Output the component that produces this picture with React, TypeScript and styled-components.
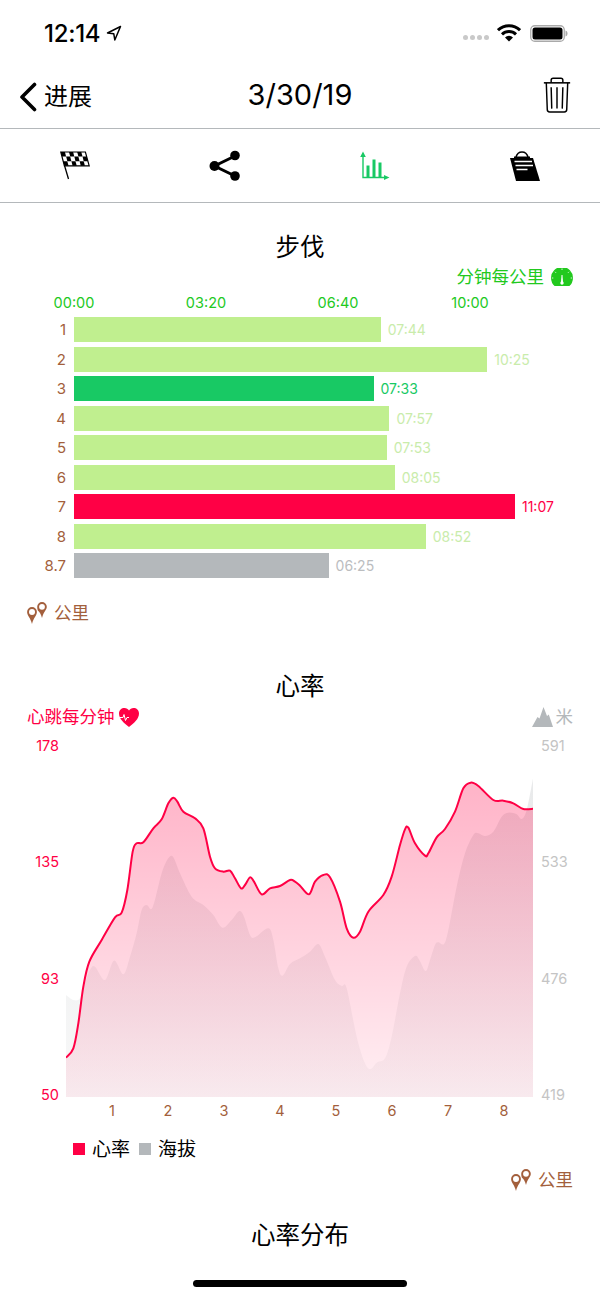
import React from "react";
import styled, { createGlobalStyle } from "styled-components";

const RED = "#ff0045";
const GREEN = "#22c91e";
const MINT = "#18c964";
const LIME = "#c0ef8f";
const LIME_TEXT = "#c9ecab";
const SLATE = "#b4b8bb";
const BROWN = "#a35f3c";

const GlobalStyle = createGlobalStyle`
  html, body {
    margin: 0;
    padding: 0;
    background: #fff;
  }
  body {
    font-family: Inter, "Noto Sans CJK SC", sans-serif;
    color: #000;
  }
`;

const Page = styled.div`
  position: relative;
  width: 600px;
  height: 1299px;
  overflow: hidden;
  background: #fff;
`;

const StatusBar = styled.div`
  height: 66px;
  padding: 0 32px 0 44px;
  box-sizing: border-box;
  display: flex;
  align-items: center;
  justify-content: space-between;
`;

const StatusLeft = styled.div`
  display: flex;
  align-items: center;
  gap: 6px;
  font-size: 24px;
  font-weight: 500;
  letter-spacing: -0.3px;
`;

const StatusRight = styled.div`
  display: flex;
  align-items: center;
  gap: 9px;
`;

const SignalDots = styled.div`
  display: flex;
  gap: 1.5px;
  margin-top: 9px;
  margin-right: -1px;
`;

const SignalDot = styled.span`
  width: 5.5px;
  height: 5.5px;
  border-radius: 50%;
  background: #c9c9c9;
`;

const NavBar = styled.div`
  height: 62px;
  padding: 0 29px 0 19px;
  display: flex;
  align-items: center;
  justify-content: space-between;
  border-bottom: 1.5px solid ${SLATE};
`;

const BackLink = styled.div`
  width: 130px;
  display: flex;
  align-items: center;
  gap: 7px;
  font-size: 24px;
`;

const BackText = styled.span`
  padding-bottom: 5px;
`;

const NavDate = styled.div`
  font-size: 29px;
  padding-bottom: 6px;
`;

const NavAction = styled.div`
  width: 120px;
  display: flex;
  justify-content: flex-end;
  padding-bottom: 4px;
`;

const TabBar = styled.div`
  height: 73px;
  display: grid;
  grid-template-columns: repeat(4, 1fr);
  border-bottom: 1.5px solid ${SLATE};
`;

const Tab = styled.div`
  display: flex;
  align-items: center;
  justify-content: center;
`;

const SectionTitle = styled.h2<{ $top: number }>`
  margin: ${(p) => p.$top}px 0 0;
  height: 34px;
  line-height: 34px;
  font-size: 24.5px;
  font-weight: 400;
  text-align: center;
`;

const UnitRow = styled.div<{ $top: number; $justify: string }>`
  margin-top: ${(p) => p.$top}px;
  height: 22px;
  padding: 0 27px;
  display: flex;
  align-items: center;
  justify-content: ${(p) => p.$justify};
`;

const UnitLabel = styled.div<{ $color: string; $gap: number }>`
  display: flex;
  align-items: center;
  gap: ${(p) => p.$gap}px;
  font-size: 17.5px;
  color: ${(p) => p.$color};
`;

const UnitText = styled.span`
  padding-bottom: 3px;
`;

const PaceAxis = styled.div`
  margin: 6px 0 0 8px;
  height: 18px;
  display: grid;
  grid-template-columns: repeat(4, 132px);
`;

const PaceTick = styled.span`
  font-size: 14.5px;
  line-height: 18px;
  text-align: center;
  color: ${GREEN};
`;

const PaceList = styled.div`
  margin-top: 5px;
  display: flex;
  flex-direction: column;
  gap: 4.5px;
`;

const PaceRow = styled.div`
  height: 25px;
  display: flex;
  align-items: center;
`;

const PaceIndex = styled.span`
  width: 74px;
  padding-right: 8px;
  box-sizing: border-box;
  text-align: right;
  font-size: 15px;
  color: ${BROWN};
`;

const PaceBar = styled.div<{ $color: string }>`
  height: 25px;
  background: ${(p) => p.$color};
`;

const PaceValue = styled.span<{ $color: string }>`
  margin-left: 7px;
  font-size: 14px;
  color: ${(p) => p.$color};
`;

const ChartRow = styled.div`
  margin-top: 9px;
  height: 365px;
  display: flex;
`;

const ValueAxis = styled.div<{ $color: string; $align: string; $width: number }>`
  width: ${(p) => p.$width}px;
  height: 365px;
  margin-top: 1px;
  display: flex;
  flex-direction: column;
  justify-content: space-between;
  text-align: ${(p) => p.$align};
  font-size: 14.5px;
  line-height: 16px;
  color: ${(p) => p.$color};
`;

const Plot = styled.svg`
  display: block;
  width: 467px;
  height: 360px;
  margin-left: 7px;
  margin-right: 8px;
  flex: none;
`;

const DistanceAxis = styled.div`
  margin: 0 0 0 84px;
  height: 18px;
  display: grid;
  grid-template-columns: repeat(8, 56px);
`;

const DistanceTick = styled.span`
  font-size: 14.5px;
  line-height: 18px;
  text-align: center;
  color: ${BROWN};
`;

const Legend = styled.div`
  margin: 17px 0 0 73px;
  height: 24px;
  display: flex;
  align-items: center;
  font-size: 19px;
`;

const LegendSwatch = styled.span<{ $color: string }>`
  width: 12px;
  height: 12px;
  background: ${(p) => p.$color};
  margin-right: 7px;
`;

const LegendText = styled.span`
  margin-right: 9px;
  padding-bottom: 4px;
`;

const HomeIndicator = styled.div`
  position: absolute;
  left: 193px;
  bottom: 12px;
  width: 214px;
  height: 7px;
  border-radius: 4px;
  background: #000;
`;

const LocationIcon = () => (
  <svg width="16" height="16" viewBox="0 0 16 16">
    <path d="M14.5 1.5 1.5 8l6.3.8 1 6.2z" fill="none" stroke="#000" strokeWidth="1.5" strokeLinejoin="round" />
  </svg>
);

const WifiIcon = () => (
  <svg width="24" height="18" viewBox="0 0 24 18">
    <path d="M1 6.2a16 16 0 0 1 22 0" fill="none" stroke="#000" strokeWidth="3" />
    <path d="M5 10.3a10.2 10.2 0 0 1 14 0" fill="none" stroke="#000" strokeWidth="3" />
    <path d="M8 13.4a5.7 5.7 0 0 1 8 0L12 17.5z" fill="#000" />
  </svg>
);

const BatteryIcon = () => (
  <svg width="38" height="17" viewBox="0 0 38 17">
    <rect x="0.75" y="0.75" width="33.5" height="15.5" rx="4" fill="none" stroke="#aaa" strokeWidth="1.3" />
    <rect x="2.5" y="2.5" width="30" height="12" rx="2.5" fill="#000" />
    <path d="M35.5 5.5c1.4.4 2 1.500 2 3s-.6 2.600-2 3z" fill="#aaa" />
  </svg>
);

const BackIcon = () => (
  <svg width="18" height="30" viewBox="0 0 18 30">
    <path d="M15.500 2.500 3 15l12.500 12.500" fill="none" stroke="#000" strokeWidth="3.600" strokeLinecap="round" strokeLinejoin="round" />
  </svg>
);

const TrashIcon = () => (
  <svg width="28" height="36" viewBox="0 0 28 37">
    <path d="M0.500 6h27" stroke="#000" strokeWidth="1.600" />
    <path d="M8 6V3.200C8 2 8.800 1.300 10 1.300h8c1.200 0 2 .7 2 1.900V6" fill="none" stroke="#000" strokeWidth="1.500" />
    <path d="M3 6l1 27.500c0 1.500 1 2.500 2.500 2.500h15c1.500 0 2.500-1 2.500-2.500L25 6" fill="none" stroke="#000" strokeWidth="1.500" />
    <path d="M8 10.500l.6 22M14 10.500v22M20 10.500l-.6 22" stroke="#000" strokeWidth="1.500" />
  </svg>
);

const FlagIcon = () => {
  const squares: React.ReactElement[] = [];
  for (let row = 0; row < 3; row++) {
    for (let col = 0; col < 6; col++) {
      if ((row + col) % 2 === 0) {
        squares.push(<rect key={`${row}-${col}`} x={col} y={row} width="1" height="1" fill="#000" />);
      }
    }
  }
  return (
    <svg width="31" height="29" viewBox="0 0 31 29">
      <g transform="matrix(4.1 0 1.2 4.6 0.800 1)">{squares}</g>
      <path d="M.8 1h24.600l3.800 13.800H4.400z" fill="none" stroke="#000" strokeWidth="1.200" />
      <path d="M4.500 14.500l4 13.500" stroke="#000" strokeWidth="1.300" />
    </svg>
  );
};

const ShareIcon = () => (
  <svg width="32" height="32" viewBox="0 0 32 32">
    <path d="M26 6 5.500 16 26 26" fill="none" stroke="#000" strokeWidth="3" />
    <circle cx="26" cy="5.500" r="4.800" fill="#000" />
    <circle cx="5.500" cy="16" r="5" fill="#000" />
    <circle cx="26" cy="26" r="4.800" fill="#000" />
  </svg>
);

const BarsIcon = () => (
  <svg width="30" height="29" viewBox="0 0 30 29">
    <path d="M3 5v21.500h22" fill="none" stroke={MINT} strokeWidth="1.400" />
    <path d="M3 .5 5.800 6H.2zM29.500 26.500 24 29v-5z" fill={MINT} />
    <path d="M6.500 14.500h3v12h-3zM12.500 8.500h3v18h-3zM18.500 11.500h3v15h-3z" fill={MINT} />
  </svg>
);

const ClipboardIcon = () => (
  <svg width="30" height="30" viewBox="0 0 30 30">
    <path d="M0 7h23l7 23H6z" fill="#000" />
    <path d="M6 6c1-3.500 3-5 6-5s5 1.500 6 5" fill="none" stroke="#000" strokeWidth="1.600" />
    <path d="M4 5.500h16v2.500H4z" fill="#000" />
    <path d="M4.500 10.500h17.500M5.500 14.500h17.500M6.500 18.500h11" stroke="#fff" strokeWidth="1.600" />
  </svg>
);

const GaugeIcon = () => (
  <svg width="22" height="18" viewBox="0 0 22 18">
    <path d="M3.600 18A11 11 0 1 1 18.400 18z" fill="#22c91e" />
    <path d="M11 .5v1.500M4 3.800l1 1M18 3.800l-1 1M.8 10h1.500M19.700 10h1.500" stroke="#fff" strokeWidth="0.800" />
    <path d="M10.500 7h1l.5 7h-2z" fill="#fff" />
    <circle cx="11" cy="15" r="1.700" fill="#fff" />
  </svg>
);

const PinsIcon = () => (
  <svg width="20" height="22" viewBox="0 0 20 22">
    <path
      d="M15 0a4.800 4.800 0 0 1 4.800 4.800C19.800 8 16.500 10 15 16c-.5-2-1.200-3.500-2-5a6.500 6.500 0 0 0-2.200-2.600c-.4-1-.6-2.200-.6-3.600A4.800 4.800 0 0 1 15 0z"
      fill={BROWN}
    />
    <circle cx="15" cy="4.800" r="2.900" fill="#fff" />
    <path d="M5 5a4.900 4.900 0 0 1 4.900 4.900C9.900 13.500 6.500 15.500 5 22c-1.500-6.500-4.900-8.500-4.900-12.100A4.900 4.900 0 0 1 5 5z" fill={BROWN} />
    <circle cx="5" cy="9.900" r="3" fill="#fff" />
  </svg>
);

const HeartIcon = () => (
  <svg width="20" height="19" viewBox="0 0 20 19">
    <path d="M10 19C5 15 0 11 0 5.500 0 2 2.500 0 5.500 0 7.500 0 9 1 10 2.500 11 1 12.500 0 14.500 0 17.500 0 20 2 20 5.500 20 11 15 15 10 19z" fill={RED} />
    <path d="M.5 9.500h3.500L5 6.500l1.500 6 1.500-3h2" fill="none" stroke="#fff" strokeWidth="1" />
  </svg>
);

const MountainIcon = () => (
  <svg width="21" height="20" viewBox="0 0 21 20">
    <path d="M0 20 5.500 10 7.500 11.500 11.500 0 15 9 16.800 7.500 21 20z" fill={SLATE} />
  </svg>
);

type Lap = { index: string; time: string; color: string; text: string };

const PX_PER_MINUTE = 39.67;

const laps: Lap[] = [
  { index: "1", time: "07:44", color: LIME, text: LIME_TEXT },
  { index: "2", time: "10:25", color: LIME, text: LIME_TEXT },
  { index: "3", time: "07:33", color: MINT, text: MINT },
  { index: "4", time: "07:57", color: LIME, text: LIME_TEXT },
  { index: "5", time: "07:53", color: LIME, text: LIME_TEXT },
  { index: "6", time: "08:05", color: LIME, text: LIME_TEXT },
  { index: "7", time: "11:07", color: RED, text: RED },
  { index: "8", time: "08:52", color: LIME, text: LIME_TEXT },
  { index: "8.7", time: "06:25", color: SLATE, text: "#bbbdbf" },
];

function barWidth(time: string) {
  const [m, s] = time.split(":").map(Number);
  return (m + s / 60) * PX_PER_MINUTE;
}

// points read off the picture, page coordinates
const toPage = (pts: number[][], ox: number) => pts.map(([x, y]) => [ox + x / 3, 760 + y / 3]);

const heartLine = [
  ...toPage(
    [
      [78, 893], [100, 865], [115, 790], [130, 680], [148, 605], [185, 540], [225, 472], [245, 458],
      [262, 390], [278, 275], [290, 250], [310, 247], [340, 205], [365, 178], [385, 130], [400, 113],
      [412, 125], [430, 155], [465, 175], [490, 205], [510, 290], [525, 325], [550, 335], [570, 332],
      [585, 355], [603, 385], [615, 375], [630, 352], [642, 365], [665, 403], [690, 385], [720, 378],
      [750, 360], [765, 365],
    ],
    40,
  ),
  ...toPage(
    [
      [0, 377], [27, 403], [45, 365], [70, 345], [90, 352], [120, 425], [140, 505], [160, 533],
      [180, 515], [205, 455], [250, 405], [275, 350], [300, 255], [315, 208], [325, 203], [345, 250],
      [375, 287], [385, 280], [410, 232], [435, 207], [465, 155], [490, 85], [512, 68], [535, 78],
      [580, 120], [610, 122], [640, 130], [670, 147], [700, 146],
    ],
    300,
  ),
];

const elevationLine = [
  ...toPage(
    [
      [78, 705], [100, 720], [120, 715], [135, 670], [150, 630], [165, 620], [195, 660], [222, 602],
      [250, 643], [270, 590], [290, 520], [305, 450], [320, 435], [338, 442], [365, 340], [385, 295],
      [400, 292], [420, 340], [455, 410], [490, 435], [520, 465], [547, 503], [575, 480], [598, 453],
      [612, 470], [630, 525], [645, 532], [685, 505], [700, 540], [715, 625], [728, 647], [750, 612],
    ],
    40,
  ),
  ...toPage(
    [
      [0, 595], [30, 575], [55, 552], [75, 590], [105, 660], [125, 678], [140, 685], [170, 830],
      [195, 910], [212, 927], [230, 908], [255, 895], [275, 830], [300, 700], [320, 620], [345, 588],
      [358, 600], [377, 633], [390, 600], [405, 555], [415, 547], [432, 552], [445, 510], [470, 380],
      [495, 280], [520, 225], [535, 220], [555, 228], [580, 215], [605, 170], [625, 158], [650, 163],
      [665, 177], [680, 150], [700, 50],
    ],
    300,
  ),
];

function smoothPath(pts: number[][]) {
  let d = `M${pts[0][0]} ${pts[0][1]}`;
  for (let i = 0; i < pts.length - 1; i++) {
    const p0 = pts[Math.max(i - 1, 0)];
    const p1 = pts[i];
    const p2 = pts[i + 1];
    const p3 = pts[Math.min(i + 2, pts.length - 1)];
    const c1x = p1[0] + (p2[0] - p0[0]) / 6;
    const c1y = p1[1] + (p2[1] - p0[1]) / 6;
    const c2x = p2[0] - (p3[0] - p1[0]) / 6;
    const c2y = p2[1] - (p3[1] - p1[1]) / 6;
    d += `C${c1x} ${c1y} ${c2x} ${c2y} ${p2[0]} ${p2[1]}`;
  }
  return d;
}

const BASE_Y = 1097;
const closeArea = (pts: number[][]) =>
  `${smoothPath(pts)}L${pts[pts.length - 1][0]} ${BASE_Y}L${pts[0][0]} ${BASE_Y}Z`;

function HeartChart() {
  return (
    <Plot viewBox="66 737 467 360">
      <defs>
        <linearGradient id="elevationFill" gradientUnits="userSpaceOnUse" x1="0" y1="775" x2="0" y2={BASE_Y}>
          <stop offset="0" stopColor={SLATE} stopOpacity="0.3" />
          <stop offset="1" stopColor={SLATE} stopOpacity="0.09" />
        </linearGradient>
        <linearGradient id="heartFill" gradientUnits="userSpaceOnUse" x1="0" y1="780" x2="0" y2={BASE_Y}>
          <stop offset="0" stopColor={RED} stopOpacity="0.3" />
          <stop offset="1" stopColor={RED} stopOpacity="0.06" />
        </linearGradient>
      </defs>
      <path d={closeArea(elevationLine)} fill="url(#elevationFill)" />
      <path d={closeArea(heartLine)} fill="url(#heartFill)" />
      <path d={smoothPath(heartLine)} fill="none" stroke={RED} strokeWidth="2" />
    </Plot>
  );
}

export default function App() {
  return (
    <Page>
      <GlobalStyle />
      <StatusBar>
        <StatusLeft>
          12:14
          <LocationIcon />
        </StatusLeft>
        <StatusRight>
          <SignalDots>
            {[0, 1, 2, 3].map((i) => (
              <SignalDot key={i} />
            ))}
          </SignalDots>
          <WifiIcon />
          <BatteryIcon />
        </StatusRight>
      </StatusBar>

      <NavBar>
        <BackLink>
          <BackIcon />
          <BackText>进展</BackText>
        </BackLink>
        <NavDate>3/30/19</NavDate>
        <NavAction>
          <TrashIcon />
        </NavAction>
      </NavBar>

      <TabBar>
        <Tab>
          <FlagIcon />
        </Tab>
        <Tab>
          <ShareIcon />
        </Tab>
        <Tab>
          <BarsIcon />
        </Tab>
        <Tab>
          <ClipboardIcon />
        </Tab>
      </TabBar>

      <SectionTitle $top={27}>步伐</SectionTitle>
      <UnitRow $top={2} $justify="flex-end">
        <UnitLabel $color={GREEN} $gap={7}>
          <UnitText>分钟每公里</UnitText>
          <GaugeIcon />
        </UnitLabel>
      </UnitRow>
      <PaceAxis>
        {["00:00", "03:20", "06:40", "10:00"].map((t) => (
          <PaceTick key={t}>{t}</PaceTick>
        ))}
      </PaceAxis>
      <PaceList>
        {laps.map((lap) => (
          <PaceRow key={lap.index}>
            <PaceIndex>{lap.index}</PaceIndex>
            <PaceBar $color={lap.color} style={{ width: barWidth(lap.time) }} />
            <PaceValue $color={lap.text}>{lap.time}</PaceValue>
          </PaceRow>
        ))}
      </PaceList>
      <UnitRow $top={24} $justify="flex-start">
        <UnitLabel $color={BROWN} $gap={7}>
          <PinsIcon />
          <UnitText>公里</UnitText>
        </UnitLabel>
      </UnitRow>

      <SectionTitle $top={45}>心率</SectionTitle>
      <UnitRow $top={3} $justify="space-between">
        <UnitLabel $color={RED} $gap={4}>
          <UnitText>心跳每分钟</UnitText>
          <HeartIcon />
        </UnitLabel>
        <UnitLabel $color={SLATE} $gap={3}>
          <MountainIcon />
          <UnitText>米</UnitText>
        </UnitLabel>
      </UnitRow>
      <ChartRow>
        <ValueAxis $color={RED} $align="right" $width={59}>
          <span>178</span>
          <span>135</span>
          <span>93</span>
          <span>50</span>
        </ValueAxis>
        <HeartChart />
        <ValueAxis $color="#c4c4c4" $align="left" $width={40}>
          <span>591</span>
          <span>533</span>
          <span>476</span>
          <span>419</span>
        </ValueAxis>
      </ChartRow>
      <DistanceAxis>
        {[1, 2, 3, 4, 5, 6, 7, 8].map((n) => (
          <DistanceTick key={n}>{n}</DistanceTick>
        ))}
      </DistanceAxis>
      <Legend>
        <LegendSwatch $color={RED} />
        <LegendText>心率</LegendText>
        <LegendSwatch $color={SLATE} />
        <LegendText>海拔</LegendText>
      </Legend>
      <UnitRow $top={8} $justify="flex-end">
        <UnitLabel $color={BROWN} $gap={7}>
          <PinsIcon />
          <UnitText>公里</UnitText>
        </UnitLabel>
      </UnitRow>

      <SectionTitle $top={27}>心率分布</SectionTitle>
      <HomeIndicator />
    </Page>
  );
}
